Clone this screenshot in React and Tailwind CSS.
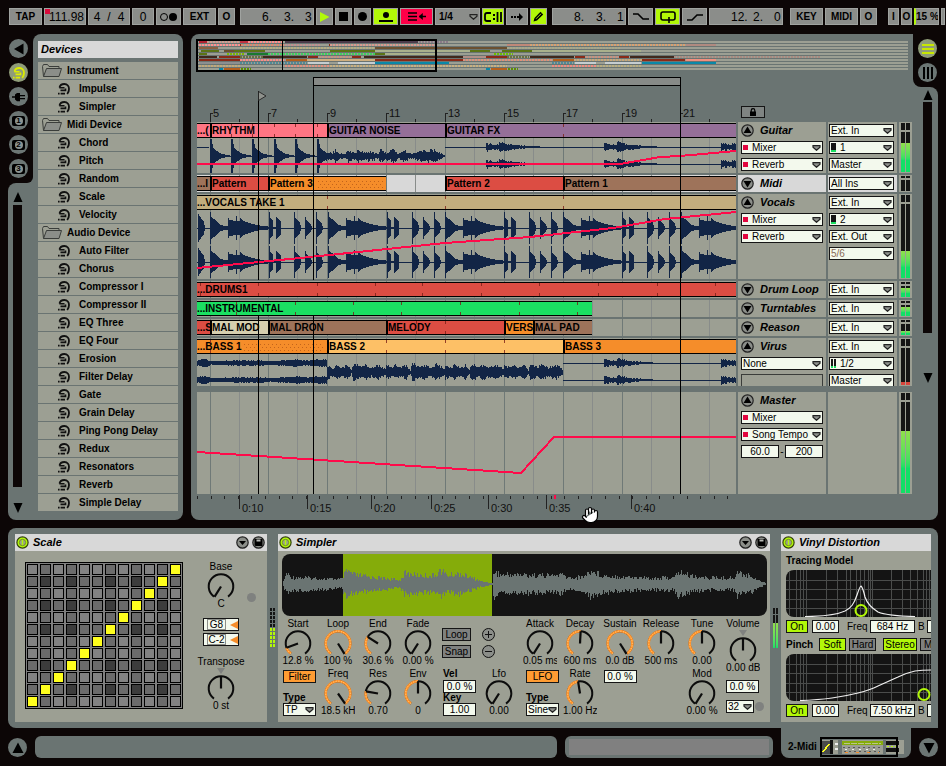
import { Hand } from "lucide-react";

const LANE_START = 197;
const LANE_WIDTH = 539;
const MAJOR_BARS = [210, 268, 327, 386, 445, 504, 563, 622, 680];

const DEVICES = [
  { name: "Instrument", folder: true },
  { name: "Impulse" },
  { name: "Simpler" },
  { name: "Midi Device", folder: true },
  { name: "Chord" },
  { name: "Pitch" },
  { name: "Random" },
  { name: "Scale" },
  { name: "Velocity" },
  { name: "Audio Device", folder: true },
  { name: "Auto Filter" },
  { name: "Chorus" },
  { name: "Compressor I" },
  { name: "Compressor II" },
  { name: "EQ Three" },
  { name: "EQ Four" },
  { name: "Erosion" },
  { name: "Filter Delay" },
  { name: "Gate" },
  { name: "Grain Delay" },
  { name: "Ping Pong Delay" },
  { name: "Redux" },
  { name: "Resonators" },
  { name: "Reverb" },
  { name: "Simple Delay" },
];

const C = {
  pink: "#ff7583",
  purple: "#956f98",
  red: "#dc4d43",
  brown: "#9e735a",
  orange: "#f58d2a",
  peach: "#fdc066",
  tan: "#c3ae7e",
  green: "#1be062",
  cream: "#d5ceae",
};

/* ---------- waveform helpers ---------- */

// mirrored polygon round a centre line, pts = [dx, amplitude]
function blob(x, cy, pts) {
  const top = pts.map(([dx, a]) => `${x + dx} ${cy - a}`);
  const bottom = pts.map(([dx, a]) => `${x + dx} ${cy + a}`).reverse();
  return `M${top.concat(bottom).join("L")}Z`;
}

function rand(n) {
  const v = Math.sin(n * 12.9898) * 43758.5453;
  return v - Math.floor(v);
}

// one bar for every pixel, amplitude taken from a list of [x, a] points
function bars(env, cy, jitter, seed = 1) {
  let d = "";
  for (let i = 0; i < env.length - 1; i++) {
    const [x0, a0] = env[i];
    const [x1, a1] = env[i + 1];
    for (let x = x0; x < x1; x++) {
      const a = a0 + ((a1 - a0) * (x - x0)) / (x1 - x0);
      const up = Math.max(0.5, a * (1 - jitter * rand(x + seed)));
      const down = Math.max(0.5, a * (1 - jitter * rand(x * 3 + seed)));
      d += `M${x} ${cy - up}h1v${up + down}h-1Z`;
    }
  }
  return d;
}

const HIT = [[0, 17], [2, 17], [3, 8], [7, 5], [12, 2], [20, 0.5]];
const guitarWave = (() => {
  let d = "";
  [210, 231, 252, 274, 295, 317].forEach((x) => {
    d += blob(x, 156, HIT);
  });
  d += bars([[322, 6], [327, 5], [332, 4], [335, 8], [340, 3], [345, 3], [348, 7], [354, 4], [358, 7], [366, 4], [368, 7], [378, 3], [379, 8], [386, 4], [393, 8], [398, 3], [404, 7], [410, 3], [416, 5], [425, 7], [435, 7], [445, 1]], 156, 0.5);
  [147, 164].forEach((cy) => {
    [486, 604, 721].forEach((x) => {
      const end = Math.min(x + 55, 736);
      d += bars([[x, 5], [x + 8, 3], [x + 13, 3]], cy, 0.5);
      if (x < 700) d += bars([[x + 13, 6], [x + 20, 4], [x + 34, 2], [end, 0.5]], cy, 0.4);
      else d += bars([[x + 11, 4], [736, 4]], cy, 0.3);
    });
  });
  return d;
})();

const VOX = [
  [0, [[0, 16], [1, 15], [1, 11], [4, 9], [9, 4], [14, 2], [22, 1]]],
  [18, [[0, 10], [1, 10], [1, 8], [8, 7], [8, 12], [9, 12], [9, 7], [12, 7], [12, 10], [13, 10], [15, 7], [24, 4], [34, 2], [52, 0.5]]],
  [59, [[0, 16], [1, 15], [1, 10], [4, 8], [4, 0]]],
  [66, [[0, 11], [1, 11], [5, 6], [5, 0]]],
  [84, [[0, 16], [1, 16], [1, 10], [6, 6], [7, 0]]],
  [95, [[0, 11], [1, 11], [1, 8], [6, 4], [7, 0]]],
  [106, [[0, 16], [1, 16], [1, 10], [6, 4], [7, 0]]],
];
const vocalWave = (() => {
  let d = "";
  [228, 262].forEach((cy) => {
    d += blob(198, cy, [[0, 16], [1, 13], [6, 6], [7, 0]]);
    for (let i = 0; i < 5; i++) {
      VOX.forEach(([dx, pts]) => {
        d += blob(210 + Math.round(i * 117.7) + dx, cy, pts);
      });
    }
  });
  return d;
})();

const virusWave = (() => {
  let d = "";
  [363, 380].forEach((cy, i) => {
    d += bars([[197, 3], [204, 5], [211, 2], [236, 3], [262, 3], [270, 2], [296, 4], [306, 3], [320, 4], [327, 4]], cy, 0.3, i);
    [604, 721].forEach((x) => {
      d += bars([[x, 5], [x + 8, 3], [x + 15, 3]], cy, 0.4);
      if (x < 700) d += bars([[x + 13, 5], [x + 30, 2], [x + 52, 0.5]], cy, 0.4);
    });
  });
  for (let x = 327; x < 563; x += 59) {
    d += bars([[x, 8], [x + 6, 5], [x + 9, 8], [x + 15, 5], [x + 20, 9], [x + 24, 2], [x + 26, 10], [x + 34, 6], [x + 38, 9], [x + 44, 5], [x + 50, 9], [x + 55, 6], [x + 59, 3]], 372, 0.4, x);
  }
  return d;
})();

const sampleWave = bars(
  [[1, 3], [4, 14], [8, 9], [40, 7], [60, 6], [61, 10], [65, 17], [72, 12], [90, 9], [118, 5], [122, 14], [140, 11], [152, 11], [158, 18], [166, 11], [176, 14], [188, 9], [198, 4], [210, 1], [211, 17], [218, 12], [238, 12], [272, 11], [278, 13], [285, 8], [300, 9], [308, 17], [322, 11], [360, 8], [392, 8], [396, 16], [408, 11], [424, 8], [452, 8], [455, 15], [470, 10], [478, 4], [484, 1]],
  30,
  0.5
);

/* ---------- small controls ---------- */

function ToolButton({ children, className = "" }) {
  return (
    <button className={`h-[17px] flex items-center justify-center border border-[#a0a3a0] bg-[#8b8d8a] text-[10px] leading-none font-bold text-black ${className}`}>
      {children}
    </button>
  );
}

function Position({ parts }) {
  return (
    <div className="h-[17px] w-[74px] flex items-center justify-end border border-[#a0a3a0] bg-[#8b8d8a] text-[12px] leading-none">
      <span className="w-[22px]">{parts[0]}.</span>
      <span className="w-[21px]">{parts[1]}.</span>
      <span className="w-2">{parts[2]}</span>
    </div>
  );
}

function RoundButton({ label, children }) {
  return (
    <button aria-label={label} className="size-[19px] shrink-0 rounded-full bg-[#6c7674] flex items-center justify-center">
      {children}
    </button>
  );
}

function Chevron({ className = "" }) {
  return (
    <svg viewBox="0 0 9 6" className={`pointer-events-none absolute right-px mt-px h-[6px] w-[9px] ${className}`}>
      <path d="M1 .6h7v1.600L4.500 5.300 1 2.200Z" fill="#8e918c" stroke="#222" strokeWidth="1.200" />
    </svg>
  );
}

function Select({ value, label, mark, dim, className = "w-full" }) {
  return (
    <div className={`relative flex h-[13px] shrink-0 items-center border border-[#151515] bg-[#f3f9ed] ${className}`}>
      {mark === "auto" && <span className="ml-[1px] size-[5px] shrink-0 bg-[#e2063f]" />}
      {mark === "mono" && <span className="ml-[1px] h-[9px] w-[5px] shrink-0 border-b-2 border-[#1be062] bg-[#151515]" />}
      {mark === "stereo" && (
        <span className="ml-[1px] flex shrink-0 gap-px">
          <span className="h-[9px] w-[2px] border-b-2 border-[#1be062] bg-[#151515]" />
          <span className="h-[9px] w-[2px] border-b-2 border-[#1be062] bg-[#151515]" />
        </span>
      )}
      <select
        aria-label={label}
        className={`w-full appearance-none bg-transparent text-[10px] leading-[11px] outline-none ${mark ? "pl-1" : "pl-px"} ${dim ? "text-[#8a6a55]" : "text-black"}`}
      >
        <option>{value}</option>
      </select>
      <Chevron />
    </div>
  );
}

function NumberBox({ value, label, className = "w-[33px]" }) {
  return (
    <input
      aria-label={label}
      defaultValue={value}
      className={`h-[13px] border border-[#151515] bg-[#f3f9ed] text-center text-[10px] leading-[11px] outline-none ${className}`}
    />
  );
}

function Toggle({ children, tone = "off", className = "" }) {
  const tones = {
    off: "bg-[#7f817f]",
    on: "bg-[#b2f808]",
    orange: "bg-[#ff9c33]",
  };
  return (
    <button className={`h-[13px] shrink-0 overflow-hidden border border-[#151515] text-[10px] leading-[11px] ${tones[tone]} ${className}`}>
      {children}
    </button>
  );
}

function polar(deg, r) {
  const a = (deg * Math.PI) / 180;
  return `${(14 + r * Math.sin(a)).toFixed(2)} ${(13.5 - r * Math.cos(a)).toFixed(2)}`;
}

function arc(from, to) {
  return `M${polar(from, 12.3)}A12.3 12.3 0 ${to - from > 180 ? 1 : 0} 1 ${polar(to, 12.3)}`;
}

function Knob({ label, value, amount, fill = true, bipolar, width = "w-10" }) {
  const angle = -148 + 296 * amount;
  return (
    <div className={`flex shrink-0 flex-col items-center text-[10px] ${width}`}>
      <span className="h-3 leading-3">{label}</span>
      {bipolar && (
        <svg viewBox="0 0 8 7" className="h-[7px] w-2">
          <path d="M0 0h8L4 6Z" fill="#7f817f" />
        </svg>
      )}
      <svg viewBox="0 0 28 25" className="h-[25px] w-7" role="slider" aria-label={label} aria-valuenow={Math.round(amount * 100)}>
        <path d={arc(-145, 145)} fill="none" stroke="#0c0c0c" strokeWidth="2" />
        {fill && amount > 0 && (
          <>
            <path d={arc(-145, Math.min(angle, 145))} fill="none" stroke="#ff922b" strokeWidth="2.6" />
            <path d={arc(-145, Math.min(angle, 145))} fill="none" stroke="#ffd98a" strokeWidth="1" strokeDasharray="1 1.6" />
          </>
        )}
        <path d={`M14 13.5L${polar(angle, 12.3)}`} stroke="#0c0c0c" strokeWidth="2.2" />
      </svg>
      <span className="h-[11px] w-[34px] overflow-hidden text-center leading-[11px] whitespace-nowrap">{value}</span>
    </div>
  );
}

function DeviceIcon({ color = "#111", className = "h-3 w-[13px]" }) {
  return (
    <svg viewBox="0 0 13 12" className={className} fill="none" stroke={color} strokeWidth="1.8">
      <path d="M2.500 4.500C3 2 5 1 7.300 1C10.500 1 12 3.500 12 6C12 8 11.500 9.500 10.200 11" />
      <path d="M2.300 4.700H7.500M3.500 7.400h5V5.500" strokeWidth="1.600" />
      <path d="M1 10.600h1.600M3.600 10.600h4.400" strokeWidth="1.600" />
    </svg>
  );
}

/* ---------- toolbar ---------- */

function Toolbar() {
  return (
    <header className="flex h-[34px] gap-[5px] overflow-hidden pt-2 pl-[9px] whitespace-nowrap">
      <div className="flex gap-[2px]">
        <ToolButton className="w-[33px]">TAP</ToolButton>
        <div className="relative flex h-[17px]">
          <input
            aria-label="Tempo"
            defaultValue="111.98"
            className="h-[17px] w-[42px] border border-[#a0a3a0] bg-[#8b8d8a] pr-px text-right text-[12px] leading-none outline-none"
          />
          <span className="absolute top-px left-px size-[5px] bg-[#d80c3c]" />
        </div>
        <div className="flex h-[17px] w-[42px] items-center justify-center gap-[7px] border border-[#a0a3a0] bg-[#8b8d8a] text-[12px] leading-none">
          <span>4</span>
          <span>/</span>
          <span>4</span>
        </div>
        <div className="flex h-[17px] w-[22px] items-center justify-center border border-[#a0a3a0] bg-[#8b8d8a] text-[12px] leading-none">0</div>
        <ToolButton className="w-[25px] gap-px">
          <span className="size-[8px] rounded-full border border-black" />
          <span className="size-[8px] rounded-full bg-black" />
        </ToolButton>
        <ToolButton className="w-[33px]">EXT</ToolButton>
        <ToolButton className="w-[17px]">O</ToolButton>
      </div>

      <div className="flex gap-[2px]">
        <Position parts={[6, 3, 3]} />
        <ToolButton className="w-[17px]">
          <svg viewBox="0 0 10 10" className="size-[10px]"><path d="M0 0l9.500 5L0 10Z" fill="#b2f808" /></svg>
        </ToolButton>
        <ToolButton className="w-[17px]"><span className="size-[9px] bg-black" /></ToolButton>
        <ToolButton className="w-[17px]"><span className="size-[9px] rounded-full bg-black" /></ToolButton>
        <button aria-label="Overdub" className="flex h-[17px] w-[25px] flex-col items-center justify-center gap-[2px] border border-[#a0a3a0] bg-[#b2f808]">
          <span className="size-[6px] rounded-full bg-black" />
          <span className="h-[2px] w-[14px] bg-black" />
        </button>
        <button aria-label="Back to arrangement" className="flex h-[17px] w-[33px] items-center justify-center border border-[#a0a3a0] bg-[#ff0048]">
          <svg viewBox="0 0 18 9" className="h-[9px] w-[18px]" fill="none" stroke="#000" strokeWidth="1.600">
            <path d="M0 1h9M0 4.500h9M0 8h9M11.500 4.500h6.500" />
            <path d="M14.500 1.500L11 4.500l3.500 3Z" fill="#000" strokeWidth=".5" />
          </svg>
        </button>
        <div className="relative flex h-[17px] w-[45px] items-center border border-[#a0a3a0] bg-[#8b8d8a]">
          <select aria-label="Quantization" className="w-full appearance-none bg-transparent pl-[3px] text-[10px] leading-none font-bold outline-none">
            <option>1/4</option>
          </select>
          <Chevron className="mt-[3px]" />
        </div>
        <button aria-label="Follow" className="flex h-[17px] w-[22px] items-center justify-center border border-[#a0a3a0] bg-[#b2f808]">
          <svg viewBox="0 0 18 10" className="h-[10px] w-[18px]" fill="none" stroke="#000" strokeWidth="1.800">
            <path d="M7 1H3Q1 1 1 3v4q0 2 2 2h4M13.500 0v10M17 0v10" />
            <path d="M9 3h2M9 7h2" />
          </svg>
        </button>
        <ToolButton className="w-[22px]">
          <svg viewBox="0 0 12 8" className="h-2 w-3"><path d="M0 3h2v2H0ZM3 3h2v2H3ZM6 3h2V0l4 4-4 4V5H6Z" /></svg>
        </ToolButton>
        <button aria-label="Draw" className="flex h-[17px] w-[17px] items-center justify-center border border-[#a0a3a0] bg-[#b2f808]">
          <svg viewBox="0 0 11 11" className="size-[11px]">
            <path d="M.5 10.500L1.500 7 7.500.8l2.700 2.700L4 9.500Z" />
            <path d="M3 7.800L8 2.800" stroke="#b2f808" strokeWidth=".9" />
          </svg>
        </button>
      </div>

      <div className="flex gap-[2px]">
        <Position parts={[8, 3, 1]} />
        <ToolButton className="w-[25px]">
          <svg viewBox="0 0 16 8" className="h-2 w-4" fill="none" stroke="#000" strokeWidth="1.600"><path d="M0 1h5l5 5h6" /></svg>
        </ToolButton>
        <button aria-label="Loop" className="flex h-[17px] w-[25px] items-center justify-center border border-[#a0a3a0] bg-[#b2f808]">
          <svg viewBox="0 0 16 12" className="h-3 w-4" fill="none" stroke="#000" strokeWidth="1.600">
            <path d="M6 9H3Q1 9 1 7V3q0-2 2-2h10q2 0 2 2v4q0 2-2 2h-1M9 6v6M6 9h6" />
          </svg>
        </button>
        <ToolButton className="w-[25px]">
          <svg viewBox="0 0 16 8" className="h-2 w-4" fill="none" stroke="#000" strokeWidth="1.600"><path d="M0 7h5l5-5h6" /></svg>
        </ToolButton>
        <Position parts={[12, 2, 0]} />
      </div>

      <div className="ml-[2px] flex gap-[2px]">
        <ToolButton className="w-[33px]">KEY</ToolButton>
        <ToolButton className="w-[33px]">MIDI</ToolButton>
        <ToolButton className="w-[17px]">O</ToolButton>
      </div>

      <div className="ml-auto flex gap-[2px] pr-px">
        <ToolButton className="w-[11px]">I</ToolButton>
        <ToolButton className="w-[11px]">O</ToolButton>
        <div className="flex h-[17px] w-[25px] items-center overflow-hidden border border-[#a0a3a0] border-l-2 border-l-[#b2f808] bg-[#8b8d8a] text-[10px] leading-none font-bold">15 %</div>
        <ToolButton className="w-1 overflow-hidden"></ToolButton>
      </div>
    </header>
  );
}

/* ---------- browser ---------- */

function FolderIcon({ n }) {
  return (
    <span className="flex h-[10px] w-[13px] items-center justify-center rounded-xs bg-black">
      <span className="flex size-2 items-center justify-center rounded-full bg-[#8b9492] text-[8px] leading-none font-bold">{n}</span>
    </span>
  );
}

function Browser() {
  return (
    <aside className="flex shrink-0">
      <div className="flex w-[25px] flex-col">
        <div className="bg-[#6a7472]">
          <div className="flex h-[149px] flex-col gap-[5px] rounded-br-md bg-[#0c0606] pt-[5px] pl-px">
            <RoundButton label="Hide browser">
              <svg viewBox="0 0 12 12" className="size-3"><path d="M1 6l9.500-5.500v11Z" /></svg>
            </RoundButton>
            <button aria-label="Live devices" className="flex size-[19px] shrink-0 items-center justify-center rounded-full bg-[#8f9c78]">
              <DeviceIcon color="#dcec00" />
            </button>
            <RoundButton label="Plug-in devices">
              <svg viewBox="0 0 14 10" className="h-[10px] w-[14px]"><path d="M0 4.200h3V2.500l2-1.500h3v2h5v1.300H8v1.600h5v1.300H8v2H5L3 7.500V5.800H0Z" /></svg>
            </RoundButton>
            <RoundButton label="File browser 1"><FolderIcon n="1" /></RoundButton>
            <RoundButton label="File browser 2"><FolderIcon n="2" /></RoundButton>
            <RoundButton label="File browser 3"><FolderIcon n="3" /></RoundButton>
          </div>
        </div>
        <div className="bg-[#0c0606] flex flex-1">
          <div className="flex flex-1 flex-col items-center rounded-l-lg bg-[#6a7472] pt-[9px] pr-[6px] pb-1">
            <svg viewBox="0 0 10 10" className="size-[10px]"><path d="M5 0l4.500 10h-9Z" /></svg>
            <div className="mt-[3px] w-[9px] flex-1 bg-[#0c0606]" />
            <svg viewBox="0 0 10 10" className="mt-4 mb-[3px] size-[10px]"><path d="M5 10L9.500 0h-9Z" /></svg>
          </div>
        </div>
      </div>

      <div className="w-[150px] rounded-tl-lg rounded-r-lg bg-[#6a7472] px-[5px] pt-[7px] pb-2">
        <h2 className="h-[17px] bg-[#d8d8d8] pl-[3px] text-[11px] leading-[16px] font-bold italic">Devices</h2>
        <ul className="mt-1">
          {DEVICES.map((d) => (
            <li key={d.name} className="h-[18px] border-b border-[#6a7472] bg-[#9c9f93]">
              {d.folder ? (
                <button className="flex h-full w-full items-center gap-[5px] pl-1 text-[10px] font-bold">
                  <svg viewBox="0 0 20 13" className="h-[13px] w-5" fill="#8b8e89" stroke="#3a3d3a" strokeWidth="1">
                    <path d="M1.500 12.500L.5 2.500l1-2h4l1.500 2h10v2" fill="none" />
                    <path d="M1.500 12.500l3-8h15l-2.500 8Z" />
                  </svg>
                  {d.name}
                </button>
              ) : (
                <button className="flex h-full w-full items-center gap-[9px] pl-[19px] text-[10px] font-bold">
                  <DeviceIcon />
                  {d.name}
                </button>
              )}
            </li>
          ))}
        </ul>
      </div>
    </aside>
  );
}

/* ---------- arrangement ---------- */

// [start, end, colour, dotted]
const OVERVIEW = [
  [[199, 207, "#b02030"], [207, 240, "#d09a90", 1], [240, 248, "#c03040"], [248, 284, "#ff8a8a", 1], [285, 375, "#4a3a48"], [375, 418, "#4b3b4b"], [419, 449, "#8a7a88", 1]],
  [[199, 240, "#ff9090", 1], [240, 241, "#8a2a18"], [241, 284, "#d88a70", 1], [285, 320, "#c09090", 1], [329, 330, "#8a2a18"], [330, 436, "#d89a90", 1], [507, 530, "#c08878"], [530, 685, "#d8a070", 1], [686, 716, "#b08a80"]],
  [[199, 218, "#8a6040"], [240, 375, "#b5ad80", 1], [375, 449, "#6b5030"], [449, 507, "#6b5030"], [507, 620, "#a8a888", 1]],
  [[201, 219, "#5b7416"], [224, 234, "#6b5030"], [234, 265, "#5b7416"], [330, 375, "#5b7416"], [375, 470, "#a9b18c"], [470, 490, "#5b7416"], [502, 532, "#5b7416"], [532, 641, "#a9b18c"]],
  [[199, 207, "#5b7416"], [227, 245, "#7cb800", 1], [247, 268, "#1a7a30"], [268, 375, "#40d060", 1], [375, 385, "#5b7416"], [385, 436, "#a9b18c"], [494, 513, "#6cc000", 1]],
  [[199, 217, "#40281c"], [219, 240, "#8a2a18"], [240, 263, "#6a7040", 1], [263, 307, "#40281c"], [308, 318, "#8a2a18"], [319, 352, "#c89080", 1], [352, 361, "#8a2a18"], [364, 463, "#40281c"], [463, 486, "#b09088"], [486, 507, "#8a2a18"], [507, 529, "#6a7040", 1], [530, 574, "#40281c"], [575, 585, "#8a2a18"], [586, 619, "#c89080", 1], [619, 629, "#8a2a18"], [630, 674, "#40281c"], [674, 820, "#a88a80", 1]],
  [[199, 240, "#8a2a18"], [240, 285, "#ff8a8a", 1], [286, 307, "#b5601c"], [307, 375, "#d0b080"], [375, 463, "#8a2a18"], [463, 553, "#e0907a", 1], [553, 574, "#b5601c"], [574, 642, "#c8a878", 1], [642, 685, "#8a2a18"], [686, 716, "#f09080"]],
  [[199, 240, "#8c8f90"], [240, 307, "#508a98", 1], [308, 329, "#c5cdd0"], [338, 375, "#c5cdd0"], [375, 449, "#0a88a8"], [552, 574, "#508a98", 1], [575, 596, "#c5cdd0"], [605, 641, "#c5cdd0"], [642, 716, "#0a88a8"]],
  [[199, 240, "#c0a878", 1], [285, 330, "#e09080", 1], [330, 418, "#c8b080", 1], [419, 507, "#c8b080", 1], [552, 597, "#f08a80", 1], [597, 642, "#b8ae80", 1]],
  [[219, 223, "#0a88a8"], [224, 240, "#b5601c"], [241, 251, "#5b9000", 1], [486, 490, "#0a88a8"], [491, 507, "#b5601c"], [508, 518, "#5b9000", 1]],
];

function Overview() {
  return (
    <svg viewBox="196 39 713 33" preserveAspectRatio="none" className="block h-[33px] w-full" shapeRendering="crispEdges">
      {OVERVIEW.map((row, i) => {
        const y = 41 + i * 3;
        return (
          <g key={i}>
            <rect x="197" y={y} width="711" height="2" fill="#9c9f93" />
            {row.map(([a, b, color, dotted]) =>
              dotted ? (
                <path key={a} d={`M${a} ${y + 1}H${b}`} stroke={color} strokeWidth="2" strokeDasharray="2 1" />
              ) : (
                <rect key={a} x={a} y={y} width={b - a} height="2" fill={color} />
              )
            )}
          </g>
        );
      })}
      <rect x="197" y="40" width="239" height="31" fill="none" stroke="#000" strokeWidth="2" />
      <path d="M282.500 40V72" stroke="#000" />
    </svg>
  );
}

function GridLines() {
  return (
    <svg viewBox="197 0 539 10" preserveAspectRatio="none" className="absolute inset-0 size-full" shapeRendering="crispEdges">
      {MAJOR_BARS.map((x) => (
        <g key={x}>
          <rect x={x} y="0" width="1" height="10" fill="#6f7977" />
          <rect x={x + 29} y="0" width="1" height="10" fill="#888c8a" />
        </g>
      ))}
    </svg>
  );
}

// clips: [start, end, colour, label], gaps have no colour; dots: [start, end]
function Clips({ clips, marks = [], dots }) {
  return (
    <div className="relative flex h-[15px] shrink-0">
      {clips.map(([a, b, color, label]) => (
        <div
          key={a}
          style={{ width: `${((b - a) / LANE_WIDTH) * 100}%`, background: color }}
          className={`shrink-0 overflow-hidden text-[10px] leading-[14px] font-bold whitespace-nowrap ${color ? "border-y border-black" : ""} ${color && a > LANE_START ? "border-l-2" : ""}`}
        >
          {label}
        </div>
      ))}
      <svg viewBox="197 0 539 15" preserveAspectRatio="none" className="pointer-events-none absolute inset-0 size-full" shapeRendering="crispEdges">
        {marks.map((x) => (
          <path key={x} d={`M${x} 1v3M${x} 11v3`} stroke="#7a1f18" strokeOpacity=".8" />
        ))}
        {dots && (
          <path
            d={`M${dots[0]} 5.500H${dots[1]}M${dots[0] + 2} 8.500H${dots[1]}M${dots[0]} 11.500H${dots[1]}`}
            stroke="#c2641c"
            strokeDasharray="1 3"
          />
        )}
      </svg>
    </div>
  );
}

function Wave({ top, height, d, lines = [], automation }) {
  return (
    <svg viewBox={`197 ${top} 539 ${height}`} preserveAspectRatio="none" className="relative block w-full min-h-0 flex-1" shapeRendering="crispEdges">
      {lines.map((l) => (
        <path key={l} d={l} stroke="#122546" />
      ))}
      {d && <path d={d} fill="#122546" />}
      {automation && <polyline points={automation} fill="none" stroke="#ff0a4a" strokeWidth="2" />}
    </svg>
  );
}

function Meter({ dark, level, hot }) {
  const bar = (
    <div className="flex w-1 flex-col">
      <div className={`bg-[#141414] ${dark ? "h-[7px]" : "h-[2px]"}`} />
      <div className="mt-[2px] flex flex-1 flex-col justify-end bg-[#141414]">
        <div style={{ height: `${level}%` }} className={hot ? "bg-[#d8453c]" : "bg-linear-to-b from-[#8fe04a] to-[#10e066] to-60%"} />
      </div>
    </div>
  );
  return (
    <div className="flex w-[13px] shrink-0 justify-center gap-px bg-[#9c9f93] py-px">
      {bar}
      {bar}
    </div>
  );
}

function Track({ name, open, height, lane, head, io, meter, selected }) {
  const bg = selected ? "bg-[#d8d8d8]" : "bg-[#9c9f93]";
  return (
    <section className={`flex gap-[2px] ${height}`}>
      <div className={`relative flex min-w-0 flex-1 flex-col overflow-hidden pt-px ${bg}`}>
        <GridLines />
        {lane}
      </div>
      <div className={`flex w-[88px] shrink-0 flex-col gap-1 overflow-hidden px-[3px] pt-[2px] ${bg}`}>
        <div className="flex h-[13px] shrink-0 items-center gap-[6px]">
          <button aria-label={`Fold ${name}`} className="shrink-0">
            <svg viewBox="0 0 13 13" className="size-[13px]">
              <circle cx="6.500" cy="6.500" r="5.700" fill="#8b8e89" stroke="#222" strokeWidth="1.200" />
              <path d={open ? "M6.500 2.500L10.500 9h-8Z" : "M6.500 10.500L10.500 4h-8Z"} />
            </svg>
          </button>
          <h3 className="text-[11px] leading-[13px] font-bold whitespace-nowrap italic">{name}</h3>
        </div>
        {head}
      </div>
      <div className={`flex w-[69px] shrink-0 flex-col gap-1 overflow-hidden pt-[2px] pr-[3px] pl-px ${bg}`}>{io}</div>
      {meter}
    </section>
  );
}

const BAR_LABELS = [[210, 5], [268, 7], [327, 9], [386, 11], [445, 13], [504, 15], [563, 17], [622, 19], [680, 21]];
const TIME_LABELS = [[239, "0:10"], [307, "0:15"], [371, "0:20"], [431, "0:25"], [488, "0:30"], [546, "0:35"], [631, "0:40"]];

function RulerLabels({ labels, cell }) {
  return (
    <>
      <span className="shrink-0" style={{ width: `${((labels[0][0] - LANE_START) / LANE_WIDTH) * 100}%` }} />
      {labels.map(([x, text], i) => {
        const end = i + 1 < labels.length ? labels[i + 1][0] : LANE_START + LANE_WIDTH;
        return (
          <span key={x} className={cell} style={{ width: `${((end - x) / LANE_WIDTH) * 100}%` }}>
            {text}
          </span>
        );
      })}
    </>
  );
}

function Arrangement() {
  return (
    <main className="flex min-w-0 flex-1">
      <div className="min-w-0 flex-1 rounded-l-lg rounded-tr-none bg-[#6a7472] pt-[5px] pr-px pl-[6px]">
        <div className="-ml-px pr-[3px]">
          <Overview />
        </div>
        <div className="relative">
          <div className="flex h-[50px] items-end">
            <div className="relative flex h-4 min-w-0 flex-1 text-[11px] leading-none text-[#111]">
              <svg viewBox="197 0 539 9" preserveAspectRatio="none" className="absolute inset-x-0 bottom-0 h-[9px] w-full" shapeRendering="crispEdges">
                {MAJOR_BARS.map((x) => (
                  <path key={x} d={`M${x}.500 9V.500h2M${x + 29}.500 9v-3`} fill="none" stroke="#222" />
                ))}
              </svg>
              <RulerLabels labels={BAR_LABELS} cell="shrink-0 pt-[2px] pl-[3px]" />
            </div>
            <div className="flex w-[176px] shrink-0 pb-1 pl-[5px]">
              <button aria-label="Lock envelopes" className="flex h-3 w-6 items-center justify-center border border-[#151515] bg-[#7f8482]">
                <svg viewBox="0 0 8 8" className="size-2">
                  <path d="M1 3.500h6V8H1Z" />
                  <path d="M2.200 4V2.500a1.800 1.800 0 013.600 0V4" fill="none" stroke="#000" strokeWidth="1.200" />
                </svg>
              </button>
            </div>
          </div>

          <div className="flex flex-col gap-[2px]">
            <Track
              name="Guitar"
              open
              height="h-[51px]"
              lane={
                <>
                  <Clips
                    clips={[[197, 210, C.pink, "...("], [210, 327, C.pink, "RHYTHM"], [327, 445, C.purple, "GUITAR NOISE"], [445, 736, C.purple, "GUITAR FX"]]}
                    marks={[231, 252, 274, 295, 317, 563]}
                  />
                  <Wave
                    top={138}
                    height={35}
                    d={guitarWave}
                    lines={["M197 147.500h12", "M210 156.500h235", "M445 147.500h291", "M445 164.500h291"]}
                    automation="197,164 620,164 660,157 680,156 736,151"
                  />
                </>
              }
              head={<><Select label="Guitar device" value="Mixer" mark="auto" /><Select label="Guitar control" value="Reverb" mark="auto" /></>}
              io={<><Select label="Guitar input" value="Ext. In" /><Select label="Guitar channel" value="1" mark="mono" /><Select label="Guitar output" value="Master" /></>}
              meter={<Meter dark level={72} />}
            />
            <Track
              name="Midi"
              selected
              height="h-[17px]"
              lane={
                <Clips
                  clips={[[197, 210, C.brown, "...l"], [210, 268, C.red, "Pattern"], [268, 386, C.orange, "Pattern 3"], [386, 445], [445, 563, C.red, "Pattern 2"], [563, 736, C.brown, "Pattern 1"]]}
                  dots={[318, 383]}
                />
              }
              io={<Select label="Midi input" value="All Ins" />}
              meter={<Meter level={0} />}
            />
            <Track
              name="Vocals"
              open
              height="h-[85px]"
              lane={
                <>
                  <Clips clips={[[197, 736, C.tan, "...VOCALS TAKE 1"]]} marks={[327, 445, 563]} />
                  <Wave
                    top={210}
                    height={69}
                    d={vocalWave}
                    lines={["M197 228.500h539", "M197 262.500h539"]}
                    automation="197,268 300,258 445,243 530,237 613,228 665,219 736,212"
                  />
                </>
              }
              head={<><Select label="Vocals device" value="Mixer" mark="auto" /><Select label="Vocals control" value="Reverb" mark="auto" /></>}
              io={<><Select label="Vocals input" value="Ext. In" /><Select label="Vocals channel" value="2" mark="mono" /><Select label="Vocals output" value="Ext. Out" /><Select label="Vocals output channel" value="5/6" dim /></>}
              meter={<Meter dark level={36} />}
            />
            <Track
              name="Drum Loop"
              height="h-[17px]"
              lane={<Clips clips={[[197, 736, C.red, "...DRUMS1"]]} marks={[200, 258, 317, 375, 422, 481, 539, 598, 657, 715]} />}
              io={<Select label="Drum Loop input" value="Ext. In" />}
              meter={<Meter level={80} />}
            />
            <Track
              name="Turntables"
              height="h-[17px]"
              lane={<Clips clips={[[197, 592, C.green, "...INSTRUMENTAL"]]} marks={[236, 295, 353, 401, 460, 519, 577]} />}
              io={<Select label="Turntables input" value="Ext. In" />}
              meter={<Meter level={80} />}
            />
            <Track
              name="Reason"
              height="h-[17px]"
              lane={
                <Clips
                  clips={[[197, 210, C.red, "...S"], [210, 268, C.cream, "MAL MOD"], [268, 386, C.brown, "MAL DRON"], [386, 504, C.red, "MELODY"], [504, 533, C.orange, "VERS"], [533, 592, C.brown, "MAL PAD"]]}
                  marks={[445, 416]}
                />
              }
              io={<Select label="Reason input" value="Ext. In" />}
              meter={<Meter level={35} />}
            />
            <Track
              name="Virus"
              open
              height="h-[48px]"
              lane={
                <>
                  <Clips
                    clips={[[197, 327, C.orange, "...BASS 1"], [327, 563, C.peach, "BASS 2"], [563, 736, C.orange, "BASS 3"]]}
                    marks={[210, 386, 445, 504, 680]}
                    dots={[244, 324]}
                  />
                  <Wave top={354} height={32} d={virusWave} lines={["M197 363.500h130", "M197 380.500h130", "M563 363.500h173", "M563 380.500h173"]} />
                </>
              }
              head={<><Select label="Virus device" value="None" /><div className="h-[13px] shrink-0 border border-[#3a3d3a]" /></>}
              io={<><Select label="Virus input" value="Ext. In" /><Select label="Virus channel" value="1/2" mark="stereo" /><Select label="Virus output" value="Master" /></>}
              meter={<Meter dark level={8} hot />}
            />
          </div>

          <div className="mt-[6px]">
            <Track
              name="Master"
              open
              height="h-[102px]"
              lane={<Wave top={393} height={101} automation="197,452 521,473 554,437 736,437" />}
              head={
                <>
                  <Select label="Master device" value="Mixer" mark="auto" />
                  <Select label="Master control" value="Song Tempo" mark="auto" />
                  <div className="flex items-center justify-between text-[10px] leading-none">
                    <NumberBox label="Tempo minimum" value="60.0" className="w-[38px]" />
                    -
                    <NumberBox label="Tempo maximum" value="200" className="w-[38px]" />
                  </div>
                </>
              }
              meter={<Meter dark level={68} />}
            />
          </div>

          {/* Loop brace, insert marker and locator lines */}
          <div className="pointer-events-none absolute inset-y-0 right-[176px] left-0">
            <div className="absolute top-[5px] right-[10.400%] left-[21.600%] h-[9px] border-y border-black bg-[#878a87]" />
            <div className="absolute top-[19px] left-[11.400%] h-[189px] w-px bg-black" />
            <div className="absolute top-[244px] bottom-0 left-[11.400%] w-px bg-black" />
            <div className="absolute top-[5px] left-[21.600%] h-[203px] w-px bg-black" />
            <div className="absolute top-[244px] bottom-0 left-[21.600%] w-px bg-black" />
            <div className="absolute top-[5px] bottom-0 left-[89.600%] w-px bg-black" />
            <svg viewBox="0 0 9 10" className="absolute top-[19px] left-[11.400%] h-[10px] w-[9px]">
              <path d="M.5.5L8 5 .5 9.500Z" fill="#8e918c" stroke="#222" strokeWidth=".9" />
            </svg>
          </div>
        </div>

        <div className="relative mr-[176px] flex h-[26px] text-[11px] leading-none text-[#111]">
          <svg viewBox="197 0 539 4" preserveAspectRatio="none" className="absolute inset-x-0 top-px h-1 w-full" shapeRendering="crispEdges">
            <path d="M197 2h539" stroke="#222" strokeWidth="3" strokeDasharray="1 12.600" />
            <path d="M554 2h2" stroke="#ff0a4a" strokeWidth="4" />
          </svg>
          <RulerLabels labels={TIME_LABELS} cell="mt-px h-[14px] shrink-0 border-l border-[#222] pt-2 pl-[2px]" />
          <Hand className="absolute top-3 left-[71.200%] size-[18px] fill-white text-black" strokeWidth={1.6} />
        </div>
      </div>

      <div className="flex w-[25px] shrink-0 flex-col">
        <div className="bg-[#6a7472]">
          <div className="flex h-[53px] flex-col gap-[5px] rounded-bl-lg bg-[#0c0606] pt-[5px] pl-[5px]">
            <button aria-label="Arrangement view" className="flex size-[19px] flex-col items-center justify-center gap-[2px] rounded-full bg-[#8f9c78]">
              <span className="h-[2px] w-3 bg-[#c8e800]" />
              <span className="h-[2px] w-3 bg-[#c8e800]" />
              <span className="h-[2px] w-3 bg-[#c8e800]" />
            </button>
            <button aria-label="Session view" className="flex size-[19px] items-center justify-center gap-[2px] rounded-full bg-[#6c7674]">
              <span className="h-3 w-[2px] bg-black" />
              <span className="h-3 w-[2px] bg-black" />
              <span className="h-3 w-[2px] bg-black" />
            </button>
          </div>
        </div>
        <div className="flex flex-1 flex-col items-center rounded-r-lg bg-[#6a7472] pt-[3px] pl-1">
          <svg viewBox="0 0 10 10" className="size-[10px]"><path d="M5 0l4.500 10h-9Z" /></svg>
          <div className="mt-[2px] w-[9px] flex-1 bg-[#0c0606]" />
          <svg viewBox="0 0 10 10" className="mt-10 mb-[137px] size-[10px]"><path d="M5 10L9.500 0h-9Z" /></svg>
        </div>
      </div>
    </main>
  );
}

/* ---------- devices ---------- */

function DeviceTitle({ name, tools = true }) {
  return (
    <div className="flex h-[17px] shrink-0 items-center bg-[#d8d8d8] pr-[2px] pl-px">
      <button aria-label={`${name} on`}>
        <svg viewBox="0 0 13 13" className="size-[13px]">
          <circle cx="6.500" cy="6.500" r="5.600" fill="#b2f808" stroke="#33400c" strokeWidth="1.200" />
          <circle cx="6.500" cy="6.500" r="3.200" fill="#9aa08c" stroke="#6d8c10" strokeWidth=".8" />
          <path d="M6.500 4v5" stroke="#b2f808" strokeWidth="1.400" />
        </svg>
      </button>
      <h2 className="ml-1 text-[11px] leading-[17px] font-bold whitespace-nowrap italic">{name}</h2>
      {tools && (
        <div className="ml-auto flex gap-[3px]">
          <button aria-label={`${name} presets`}>
            <svg viewBox="0 0 13 13" className="size-[13px]">
              <circle cx="6.500" cy="6.500" r="5.700" fill="#8b8e89" stroke="#222" strokeWidth="1.200" />
              <path d="M3 5h7L6.500 9Z" />
            </svg>
          </button>
          <button aria-label={`Save ${name}`}>
            <svg viewBox="0 0 13 13" className="size-[13px]">
              <circle cx="6.500" cy="6.500" r="5.700" fill="#8b8e89" stroke="#222" strokeWidth="1.200" />
              <path d="M2.500 3h8v7h-7l-1-1Z" />
              <path d="M4.500 3.500h4v2h-4Z" fill="#b8bab6" />
            </svg>
          </button>
        </div>
      )}
    </div>
  );
}

function GapMeter({ dotted }) {
  return (
    <div className="flex w-[11px] shrink-0 justify-center gap-px pt-[74px]">
      {[0, 1].map((i) =>
        dotted ? (
          <div key={i} className="flex w-[2px] flex-col gap-px">
            {Array.from({ length: 10 }, (_, n) => (
              <span key={n} className={`h-[3px] w-full ${n < 5 ? "bg-[#141414]" : "bg-[#b2f808]"}`} />
            ))}
          </div>
        ) : (
          <div key={i} className="flex h-10 w-[2px] flex-col">
            <span className="h-[6px] bg-[#141414]" />
            <span className="mt-px h-2 bg-[#141414]" />
            <span className="flex-1 bg-linear-to-b from-[#8fe04a] to-[#10e066]" />
          </div>
        )
      )}
    </div>
  );
}

function cellColor(row, col) {
  const black = [1, 3, 6, 8, 10];
  if (row + col === 11) return "bg-[#ffff1e]";
  const n = (black.includes(11 - row) ? 1 : 0) + (black.includes(col) ? 1 : 0);
  return ["bg-[#828282]", "bg-[#6b6b6b]", "bg-[#3c3c3c]"][n];
}

function NoteRange({ value, label }) {
  return (
    <div className="flex h-[13px] w-9 items-center border border-[#151515] bg-[#f3f9ed]">
      <input aria-label={label} defaultValue={value} className="ml-[3px] h-[11px] w-[19px] border border-[#8b8e89] text-center text-[10px] leading-none outline-none" />
      <svg viewBox="0 0 8 8" className="ml-auto size-2"><path d="M0 4l8-4v8Z" fill="#f58d2a" /></svg>
    </div>
  );
}

function ScaleDevice() {
  return (
    <section className="flex w-[252px] shrink-0 flex-col bg-[#9c9f93]">
      <DeviceTitle name="Scale" />
      <div className="flex flex-1">
        <div className="mt-[11px] ml-[10px] grid h-[147px] grid-cols-12 gap-x-[2px] gap-y-px self-start border border-black bg-[#808080] p-px">
          {Array.from({ length: 144 }, (_, i) => (
            <button
              key={i}
              aria-label={`Note ${(i % 12) + 1} to ${12 - Math.floor(i / 12)}`}
              className={`size-[11px] border border-black ${cellColor(Math.floor(i / 12), i % 12)}`}
            />
          ))}
        </div>
        <div className="ml-3 flex w-[52px] flex-col items-center pt-[10px]">
          <Knob label="Base" value="C" amount={0} />
          <div className="mt-[9px] mb-[10px] flex flex-col gap-[2px]">
            <NoteRange label="Highest note" value="G8" />
            <NoteRange label="Lowest note" value="C-2" />
          </div>
          <Knob label="Transpose" value="0 st" amount={0.5} fill={false} bipolar />
        </div>
        <span className="mt-[42px] size-[9px] rounded-full bg-[#7f817f]" />
      </div>
    </section>
  );
}

function SimplerDevice() {
  return (
    <section className="flex w-[492px] shrink-0 flex-col bg-[#9c9f93]">
      <DeviceTitle name="Simpler" />
      <svg viewBox="0 0 485 62" className="mt-[3px] ml-1 block h-[62px] w-[485px] rounded-lg bg-[#141414]" shapeRendering="crispEdges">
        <rect x="61" width="149" height="62" fill="#85ac0a" />
        <path d={sampleWave} fill="#6a7472" />
      </svg>
      <div className="mt-[2px] flex text-[10px]">
        <div className="flex w-10 flex-col gap-[2px]">
          <Knob label="Start" value="12.8 %" amount={0.128} />
          <div className="flex flex-col pt-[2px] pl-[5px]">
            <Toggle tone="orange" className="w-[33px]">Filter</Toggle>
            <span className="mt-[9px] h-[11px] leading-[11px] font-bold">Type</span>
            <Select label="Filter type" value="TP" className="w-[33px]" />
          </div>
        </div>
        <div className="flex flex-col gap-[2px]">
          <Knob label="Loop" value="100 %" amount={1} />
          <Knob label="Freq" value="18.5 kHz" amount={0.99} />
        </div>
        <div className="flex flex-col gap-[2px]">
          <Knob label="End" value="30.6 %" amount={0.306} />
          <Knob label="Res" value="0.70" amount={0.23} />
        </div>
        <div className="flex flex-col gap-[2px]">
          <Knob label="Fade" value="0.00 %" amount={0} />
          <Knob label="Env" value="0" amount={0.5} />
        </div>
        <div className="w-[82px]">
          <div className="grid h-[50px] grid-cols-[29px_13px] content-start gap-x-[11px] gap-y-1 pt-[10px] pl-1">
            <Toggle>Loop</Toggle>
            <button aria-label="Zoom in">
              <svg viewBox="0 0 13 13" className="size-[13px]" fill="#8b8e89" stroke="#111"><circle cx="6.500" cy="6.500" r="6" /><path d="M3 6.500h7M6.500 3v7" /></svg>
            </button>
            <Toggle>Snap</Toggle>
            <button aria-label="Zoom out">
              <svg viewBox="0 0 13 13" className="size-[13px]" fill="#8b8e89" stroke="#111"><circle cx="6.500" cy="6.500" r="6" /><path d="M3 6.500h7" /></svg>
            </button>
          </div>
          <div className="flex pl-[5px]">
            <div className="flex w-9 flex-col">
              <span className="h-3 leading-3 font-bold">Vel</span>
              <NumberBox label="Vel" value="0.0 %" />
              <span className="h-[10px] leading-[10px] font-bold">Key</span>
              <NumberBox label="Key" value="1.00" />
            </div>
            <Knob label="Lfo" value="0.00" amount={0} />
          </div>
        </div>
        <div className="flex w-10 flex-col gap-[2px]">
          <Knob label="Attack" value="0.05 ms" amount={0} />
          <div className="flex flex-col pt-[2px] pl-[6px]">
            <Toggle tone="orange" className="w-[33px]">LFO</Toggle>
            <span className="mt-[9px] h-[11px] leading-[11px] font-bold">Type</span>
            <Select label="LFO type" value="Sine" className="w-[33px]" />
          </div>
        </div>
        <div className="flex flex-col gap-[2px]">
          <Knob label="Decay" value="600 ms" amount={0.51} />
          <Knob label="Rate" value="1.00 Hz" amount={0.47} />
        </div>
        <div className="flex flex-col items-center gap-1">
          <Knob label="Sustain" value="0.0 dB" amount={1} />
          <NumberBox label="Sustain level" value="0.0 %" />
        </div>
        <Knob label="Release" value="500 ms" amount={0.5} width="w-[42px]" />
        <div className="flex flex-col gap-[2px]">
          <Knob label="Tune" value="0.00" amount={0.5} />
          <Knob label="Mod" value="0.00 %" amount={0} />
        </div>
        <div className="flex w-[42px] flex-col">
          <Knob label="Volume" value="0.00 dB" amount={0.5} fill={false} bipolar width="w-[42px]" />
          <div className="mt-[7px] ml-1 flex flex-col gap-[7px]">
            <NumberBox label="Volume velocity" value="0.0 %" />
            <div className="flex items-center gap-px">
              <Select label="Voices" value="32" className="w-7" />
              <span className="size-[9px] shrink-0 rounded-full bg-[#7f817f]" />
            </div>
          </div>
        </div>
      </div>
    </section>
  );
}

const LOG_LINES = [3, 10, 14, 17, 20, 40, 51, 60, 64, 70, 74, 78, 82, 84, 86, 105, 116, 124, 131, 137, 140, 143];

function Graph({ curve, cx }) {
  return (
    <div className="h-[47px] overflow-hidden rounded-l-lg bg-[#141414]">
      <svg viewBox="0 0 145 47" className="block h-[47px] w-[145px]" fill="none">
        {LOG_LINES.map((x) => (
          <path key={x} d={`M${x + 0.5} 0v47`} stroke="#4a4c4b" />
        ))}
        <path d="M0 10.500h145M0 19.500h145M0 29.500h145M0 38.500h145" stroke="#4a4c4b" />
        <path d={curve} stroke="#f0f0f0" strokeWidth="1.200" />
        <circle cx={cx} cy="40.500" r="5.500" stroke="#b2f808" strokeWidth="2" />
      </svg>
    </div>
  );
}

function VinylRow({ freq, name }) {
  return (
    <div className="flex h-[13px] items-center">
      <Toggle tone="on" className="w-[22px]">On</Toggle>
      <NumberBox label={`${name} drive`} value="0.00" className="ml-1 w-[27px] shrink-0" />
      <span className="ml-2 w-[23px] shrink-0">Freq</span>
      <NumberBox label={`${name} frequency`} value={freq} className="w-[45px] shrink-0" />
      <span className="ml-[3px] w-[9px] shrink-0">B</span>
      <NumberBox label={`${name} bandwidth`} value="" className="w-[27px] shrink-0" />
    </div>
  );
}

function VinylDevice() {
  return (
    <section className="flex min-w-0 flex-1 flex-col overflow-hidden bg-[#9c9f93]">
      <DeviceTitle name="Vinyl Distortion" tools={false} />
      <div className="pl-[5px] text-[10px] leading-[13px] whitespace-nowrap">
        <h3 className="mt-[3px] mb-[3px] font-bold">Tracing Model</h3>
        <Graph cx="75" curve="M19 46.500C36 46.500 50 45 59 41C65 38 68 34 71 25Q74 16 75 16Q77 18 79 27C81 33 84 37 92 42Q102 46 129 46.500" />
        <div className="mt-[3px]"><VinylRow name="Tracing" freq="684 Hz" /></div>
        <div className="mt-[5px] flex">
          <h3 className="w-[33px] shrink-0 font-bold">Pinch</h3>
          <Toggle tone="on" className="w-[27px]">Soft</Toggle>
          <Toggle className="ml-[3px] w-[27px]">Hard</Toggle>
          <Toggle tone="on" className="ml-[7px] w-[34px]">Stereo</Toggle>
          <Toggle className="ml-[3px] w-[34px] pl-[3px] text-left">Mono</Toggle>
        </div>
        <div className="mt-[3px]">
          <Graph cx="138" curve="M14 46.500Q32 46 46 44Q60 42 72 39Q84 36 92 32L112 23Q120 19 129 17Q136 16 145 16" />
        </div>
        <div className="mt-[3px]"><VinylRow name="Pinch" freq="7.50 kHz" /></div>
      </div>
    </section>
  );
}

function StatusBar() {
  return (
    <footer className="flex h-[38px] items-start pl-2">
      <div className="pt-[10px]">
        <RoundButton label="Show help">
          <svg viewBox="0 0 12 12" className="size-3"><path d="M6 .5L11.500 11H.5Z" /></svg>
        </RoundButton>
      </div>
      <div className="mt-2 ml-2 h-[22px] flex-1 rounded-md bg-[#6a7472]" />
      <div className="mt-2 ml-2 h-[22px] w-[208px] shrink-0 rounded-md bg-[#6a7472] px-1 py-[3px]">
        <div className="h-full bg-[#808080]" />
      </div>
      <div className="ml-2 flex h-[30px] w-[130px] shrink-0 items-center rounded-b-lg bg-[#6a7472] pt-[8px] pl-[7px]">
        <span className="w-8 text-[10px] leading-none font-bold">2-Midi</span>
        <svg viewBox="0 0 84 20" className="h-5 w-[84px]" shapeRendering="crispEdges">
          <path d="M2 3h16v14H2ZM22 3h41v14H22ZM66 3h18v14H66Z" fill="#9c9f93" />
          <path d="M2 4h8v13H2Z" fill="#4a4c4b" />
          <path d="M10 3h3v14h-3Z" fill="#111" />
          <path d="M3 15L9 7" stroke="#ffff1e" strokeWidth="1.500" />
          <path d="M15 6h3v2h-3ZM15 11h3v2h-3Z" fill="#eee" />
          <path d="M22 4h41v4H22Z" fill="#85ac0a" />
          <path d="M24 6h37" stroke="#b9c48a" strokeDasharray="6 1" />
          <path d="M23 10h38M24 14h36" stroke="#555" strokeDasharray="2 3" />
          <path d="M25 12h34" stroke="#eee" strokeDasharray="2 5" />
          <path d="M25 15h34" stroke="#f58d2a" strokeDasharray="3 8" />
          <path d="M66 4h13v4H66ZM66 11h13v4H66Z" fill="#111" />
          <path d="M67 9h12" stroke="#b2f808" strokeDasharray="2 2" />
          <rect x="1" y="1" width="76" height="18" fill="none" stroke="#000" strokeWidth="2" />
        </svg>
      </div>
      <div className="pt-[10px] pr-2 pl-2">
        <RoundButton label="Hide devices">
          <svg viewBox="0 0 12 12" className="size-3"><path d="M6 11.500L11.500 1H.5Z" /></svg>
        </RoundButton>
      </div>
    </footer>
  );
}

export default function App() {
  return (
    <div className="min-h-screen overflow-hidden bg-[#0c0606] font-['Liberation_Sans',Arial,sans-serif] text-black">
      <Toolbar />
      <div className="flex gap-2 px-2">
        <Browser />
        <Arrangement />
      </div>
      <div className="mx-2 mt-2 flex h-[200px] rounded-t-lg rounded-bl-lg bg-[#6a7472] px-[7px] py-[6px]">
        <ScaleDevice />
        <GapMeter dotted />
        <SimplerDevice />
        <GapMeter />
        <VinylDevice />
      </div>
      <StatusBar />
    </div>
  );
}
